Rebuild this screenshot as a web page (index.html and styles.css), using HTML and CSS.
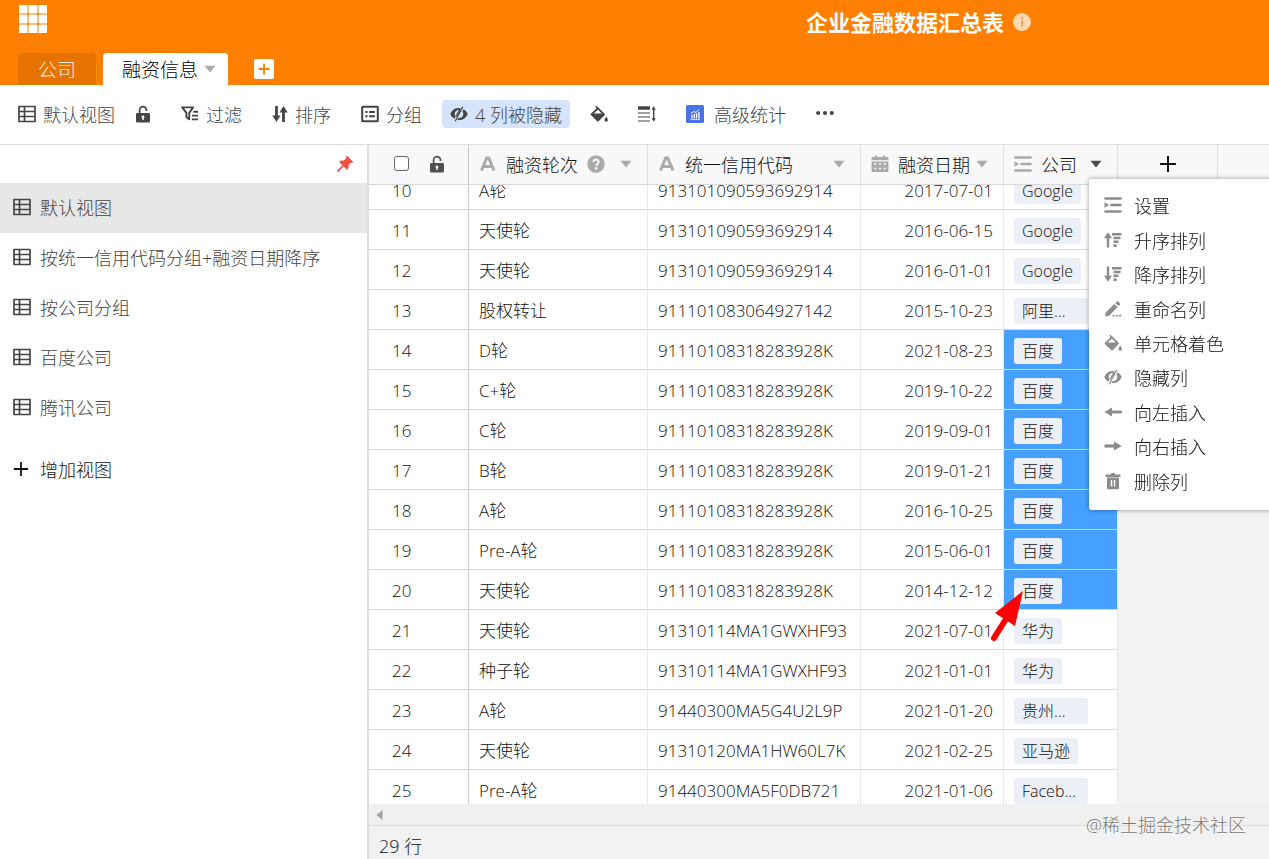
FILE: index.html
```html
<!DOCTYPE html>
<html lang="zh-CN">
<head>
<meta charset="utf-8">
<title>企业金融数据汇总表</title>
<link rel="stylesheet" href="styles.css">
</head>
<body>
<svg class="sprite" aria-hidden="true">
  <symbol id="i-table" viewBox="0 0 18 18"><path d="M1 1.5h16v15H1zM1 6.5h16M1 11.5h16M6.5 1.5v15" fill="none" stroke="currentColor" stroke-width="1.7" stroke-linejoin="round"/></symbol>
  <symbol id="i-lock" viewBox="0 0 16 18"><path d="M4.6 9V5.2a3.4 3.4 0 0 1 6.8-.4V6" fill="none" stroke="currentColor" stroke-width="1.7"/><path fill-rule="evenodd" d="M2.300 8h11.400a1.300 1.300 0 0 1 1.300 1.300v6.900a1.300 1.300 0 0 1-1.300 1.300H2.300A1.300 1.300 0 0 1 1 16.200V9.300A1.300 1.300 0 0 1 2.300 8zM8 10.600a1.500 1.500 0 0 0-.7 2.800V15h1.400v-1.600A1.500 1.500 0 0 0 8 10.600z" fill="currentColor"/></symbol>
  <symbol id="i-filter" viewBox="0 0 19 18"><path d="M1.200 2h11.600L8.700 7.800v6.700L5.700 12.300V7.800z" fill="none" stroke="currentColor" stroke-width="2" stroke-linejoin="round"/><path d="M13 6.700h5M11.500 10.700H18M11.500 14.700H18" stroke="currentColor" stroke-width="2"/></symbol>
  <symbol id="i-sort" viewBox="0 0 16 18"><path d="M4.500 1v11M11.500 6v11" stroke="currentColor" stroke-width="2.800"/><path d="M.3 10.500h8.200L4.500 17zM7.500 7.500h8.200L11.500 1z" fill="currentColor"/></symbol>
  <symbol id="i-group" viewBox="0 0 18 18"><rect x="1.200" y="1.700" width="15.600" height="14.600" rx=".6" fill="none" stroke="currentColor" stroke-width="2"/><path d="M4.300 7h2.200M8 7h5.800M4.300 11.200h2.200M8 11.200h5.800" stroke="currentColor" stroke-width="2"/></symbol>
  <symbol id="i-hide" viewBox="0 0 18 18"><path d="M10.800 3.200C5.300 1.800 2 5.200.3 9c.9 1.900 2.200 3.600 4 4.700l1.300-1.900C4 9.500 4.300 5.500 8.700 4.900l.9-.1z" fill="currentColor"/><path d="M7.200 14.800C12.700 16.200 16 12.800 17.700 9c-.9-1.900-2.200-3.600-4-4.700l-1.300 1.900c1.600 2.300 1.300 6.300-3.100 6.900l-.9.1z" fill="currentColor"/><path d="M12.800 1.800 5.200 16.200M10 4.500 5.800 11.500" stroke="currentColor" stroke-width="1.300"/></symbol>
  <symbol id="i-fill" viewBox="0 0 18 18"><path d="M5.800 1.200 8.200 3.600" stroke="currentColor" stroke-width="1.500"/><path d="M7.900 3.300 14 9.400 7.900 15.500 1.600 9.400z" fill="none" stroke="currentColor" stroke-width="1.900" stroke-linejoin="round"/><path d="M1.300 8.500h13L8 16zM16.200 11.500c1.200 1.800 1.700 2.700 1.700 3.600a1.700 1.700 0 0 1-3.400 0c0-.9.500-1.800 1.700-3.600z" fill="currentColor"/></symbol>
  <symbol id="i-height" viewBox="0 0 18 18"><path d="M0 3h12" stroke="currentColor" stroke-width="3.500"/><path d="M0 8h12M0 12h12M0 16h12" stroke="currentColor" stroke-width="1.200"/><path d="M15.700 3v12" stroke="currentColor" stroke-width="1.400"/><path d="m13.600 4.800 2.100-3.500 2.100 3.500zM13.600 13.200l2.100 3.500 2.100-3.500z" fill="currentColor"/></symbol>
  <symbol id="i-stats" viewBox="0 0 18 18"><rect width="18" height="18" rx="1.500" fill="#4b73e8"/><path d="M6 13v-3M8.300 13V9M10.600 13v-4.500M12.900 13V7" stroke="#fff" stroke-width="1.300"/><path d="M4.500 14.200h9.500M4.800 8.800l3-2.300 2.300 1 3-3" fill="none" stroke="#fff"/></symbol>
  <symbol id="i-more" viewBox="0 0 18 18"><circle cx="2.200" cy="8" r="2.100" fill="currentColor"/><circle cx="9" cy="8" r="2.100" fill="currentColor"/><circle cx="15.800" cy="8" r="2.100" fill="currentColor"/></symbol>
  <symbol id="i-pin" viewBox="0 0 18 18"><path d="M11 1.300 16.700 7c-.7.800-1.600.9-2.400.6l-2.500 2.600c.6 1.900.3 3.100-.8 4.200L7.600 11 2.300 16.400l-.9.200.2-.9L7 10.400 3.600 7c1.100-1.100 2.300-1.400 4.200-.8l2.600-2.500c-.3-.8-.2-1.700.6-2.400z" fill="currentColor" stroke="currentColor" stroke-width="1"/></symbol>
  <symbol id="i-text" viewBox="0 0 18 18"><path d="M2.500 15.500 7.700 3h2l5.300 12.500M4.700 11.500h8" fill="none" stroke="currentColor" stroke-width="3"/></symbol>
  <symbol id="i-calendar" viewBox="0 0 18 18"><path fill-rule="evenodd" d="M1.500 2H4V.5h2V2h6V.5h2V2h2.500a1 1 0 0 1 1 1v2.300H.5V3a1 1 0 0 1 1-1zM.5 6.500h17V16a1 1 0 0 1-1 1h-15a1 1 0 0 1-1-1zM3.300 8.200v1.600h2V8.200zm4.700 0v1.600h2V8.200zm4.700 0v1.600h2V8.200zM3.300 12.700v1.600h2v-1.600zm4.700 0v1.600h2v-1.600zm4.700 0v1.600h2v-1.600z" fill="currentColor"/></symbol>
  <symbol id="i-option" viewBox="0 0 18 18"><path d="M1.500 2.500h15M7.500 9h9M1.500 15.500h15" stroke="currentColor" stroke-width="2.700" stroke-linecap="round"/><path d="M.5 6.300 5.200 9 .5 11.700z" fill="currentColor"/></symbol>
  <symbol id="i-help" viewBox="0 0 18 18"><circle cx="9" cy="9" r="8.700" fill="currentColor"/><path d="M6.400 7c.1-3.200 5.300-3.200 5.300 0 0 1.800-2.500 2-2.500 4" fill="none" stroke="#fff" stroke-width="1.800"/><circle cx="9.200" cy="13.300" r="1.200" fill="#fff"/></symbol>
  <symbol id="i-caret" viewBox="0 0 12 8"><path d="M.5.8h11L6 7.500z" fill="currentColor"/></symbol>
  <symbol id="i-plus" viewBox="0 0 18 18"><path d="M9 1v16M1 9h16" stroke="currentColor" stroke-width="2"/></symbol>
  <symbol id="i-asc" viewBox="0 0 18 18"><path d="M4 5v11.500" stroke="currentColor" stroke-width="2.400"/><path d="M0 7.200h8L4 1.200z" fill="currentColor"/><path d="M8 3.200h9.500M9.500 7h7M9.500 10.800h5M9.500 14.600h3.200" stroke="currentColor" stroke-width="2.600"/></symbol>
  <symbol id="i-desc" viewBox="0 0 18 18"><path d="M4 1.500V13" stroke="currentColor" stroke-width="2.400"/><path d="M0 10.800h8l-4 6z" fill="currentColor"/><path d="M8 3.200h9.500M9.500 7h7M9.500 10.800h5M9.500 14.600h3.200" stroke="currentColor" stroke-width="2.600"/></symbol>
  <symbol id="i-edit" viewBox="0 0 18 18"><path d="m1 16.500.8-4L10.200 4l3.300 3.200-8.400 8.500zM11.200 3l1.500-1.500c.5-.5 1-.5 1.500 0L16 3.200c.5.500.5 1 0 1.500l-1.500 1.500zM8.500 14.800h2v1.800h-2zM11.800 14.800h2v1.800h-2zM15.100 14.800h2v1.800h-2z" fill="currentColor"/></symbol>
  <symbol id="i-left" viewBox="0 0 18 18"><path d="M6 9h10.500" stroke="currentColor" stroke-width="3.200" stroke-linecap="round"/><path d="M.3 9 8 4.600v8.800z" fill="currentColor"/></symbol>
  <symbol id="i-right" viewBox="0 0 18 18"><path d="M.5 9H12" stroke="currentColor" stroke-width="3.200"/><path d="M17.700 9 10 4.600v8.800z" fill="currentColor"/></symbol>
  <symbol id="i-trash" viewBox="0 0 18 18"><path fill-rule="evenodd" d="M1.500 2.500h5L7.500 1h3l1 1.500h5V5h-15zM3 5.500h12V16a1.200 1.200 0 0 1-1.200 1.200H4.200A1.200 1.200 0 0 1 3 16zM6.800 8v6.500h1.400V8zm3 0v6.500h1.400V8z" fill="currentColor"/></symbol>
</svg>

<div class="app">
  <header class="header">
    <div class="brand">
      <button class="launcher" aria-label="应用"><svg viewBox="0 0 28 28"><path d="M0 0h8v8H0zM10 0h8v8h-8zM20 0h8v8h-8zM0 10h8v8H0zM10 10h8v8h-8zM20 10h8v8h-8zM0 20h8v8H0zM10 20h8v8h-8zM20 20h8v8h-8z" fill="#fff" stroke="#fff"/></svg></button>
      <h1 class="title">企业金融数据汇总表</h1>
      <button class="info" aria-label="说明"><svg viewBox="0 0 18 18"><circle cx="9" cy="9" r="9" fill="#ffd9b3"/><circle cx="9" cy="5" r="1.300" fill="#f5a35c"/><path d="M9 7.500v6" stroke="#f5a35c" stroke-width="2"/></svg></button>
    </div>
    <nav class="tabs">
      <button class="tab">公司</button>
      <button class="tab tab-active">融资信息<svg class="caret"><use href="#i-caret"/></svg></button>
      <button class="tab-add" aria-label="新建表"><svg viewBox="0 0 12 12"><path d="M6 .5v11M.5 6h11" stroke="#ff8000" stroke-width="1.800"/></svg></button>
    </nav>
  </header>

  <div class="toolbar">
    <button class="tool"><svg class="icon"><use href="#i-table"/></svg>默认视图</button>
    <button class="tool tool-lock" aria-label="锁定"><svg class="icon icon-narrow"><use href="#i-lock"/></svg></button>
    <button class="tool"><svg class="icon"><use href="#i-filter"/></svg>过滤</button>
    <button class="tool"><svg class="icon icon-narrow"><use href="#i-sort"/></svg>排序</button>
    <button class="tool"><svg class="icon"><use href="#i-group"/></svg>分组</button>
    <button class="tool tool-on"><svg class="icon"><use href="#i-hide"/></svg>4 列被隐藏</button>
    <button class="tool" aria-label="着色"><svg class="icon"><use href="#i-fill"/></svg></button>
    <button class="tool" aria-label="行高"><svg class="icon"><use href="#i-height"/></svg></button>
    <button class="tool tool-stats"><svg class="icon"><use href="#i-stats"/></svg>高级统计</button>
    <button class="tool" aria-label="更多"><svg class="icon"><use href="#i-more"/></svg></button>
  </div>

  <div class="workspace">
    <aside class="sidebar">
      <div class="pinbar"><button class="pin" aria-label="固定"><svg class="icon"><use href="#i-pin"/></svg></button></div>
      <button class="view view-active"><svg class="icon"><use href="#i-table"/></svg>默认视图</button>
      <button class="view"><svg class="icon"><use href="#i-table"/></svg>按统一信用代码分组+融资日期降序</button>
      <button class="view"><svg class="icon"><use href="#i-table"/></svg>按公司分组</button>
      <button class="view"><svg class="icon"><use href="#i-table"/></svg>百度公司</button>
      <button class="view"><svg class="icon"><use href="#i-table"/></svg>腾讯公司</button>
      <button class="view view-add"><svg class="icon icon-add"><use href="#i-plus"/></svg>增加视图</button>
    </aside>

    <main class="sheet">
      <div class="grid" id="grid">
        <table class="table">
          <colgroup><col class="c-num"><col class="c-round"><col class="c-code"><col class="c-date"><col class="c-company"><col class="c-add"><col></colgroup>
          <thead>
            <tr>
              <th class="num"><div class="head head-num"><input class="check" type="checkbox" aria-label="全选"><svg class="icon icon-narrow dark"><use href="#i-lock"/></svg></div></th>
              <th><div class="head"><svg class="icon"><use href="#i-text"/></svg>融资轮次<svg class="icon help"><use href="#i-help"/></svg><svg class="caret"><use href="#i-caret"/></svg></div></th>
              <th><div class="head"><svg class="icon"><use href="#i-text"/></svg>统一信用代码<svg class="caret"><use href="#i-caret"/></svg></div></th>
              <th><div class="head"><svg class="icon"><use href="#i-calendar"/></svg>融资日期<svg class="caret"><use href="#i-caret"/></svg></div></th>
              <th class="anchor"><div class="head"><svg class="icon"><use href="#i-option"/></svg>公司<svg class="caret dark"><use href="#i-caret"/></svg></div>
                <div class="menu">
                  <button><svg class="icon"><use href="#i-option"/></svg>设置</button>
                  <button><svg class="icon"><use href="#i-asc"/></svg>升序排列</button>
                  <button><svg class="icon"><use href="#i-desc"/></svg>降序排列</button>
                  <button><svg class="icon"><use href="#i-edit"/></svg>重命名列</button>
                  <button><svg class="icon"><use href="#i-fill"/></svg>单元格着色</button>
                  <button><svg class="icon"><use href="#i-hide"/></svg>隐藏列</button>
                  <button><svg class="icon"><use href="#i-left"/></svg>向左插入</button>
                  <button><svg class="icon"><use href="#i-right"/></svg>向右插入</button>
                  <button><svg class="icon"><use href="#i-trash"/></svg>删除列</button>
                </div>
              </th>
              <th><button class="col-add" aria-label="新增列"><svg class="icon"><use href="#i-plus"/></svg></button></th>
              <th class="last"></th>
            </tr>
          </thead>
          <tbody>
            <tr><td class="num">10</td><td>A轮</td><td>913101090593692914</td><td class="date">2017-07-01</td><td><span class="tag">Google</span></td><td class="rest" colspan="2"></td></tr>
            <tr><td class="num">11</td><td>天使轮</td><td>913101090593692914</td><td class="date">2016-06-15</td><td><span class="tag">Google</span></td><td class="rest" colspan="2"></td></tr>
            <tr><td class="num">12</td><td>天使轮</td><td>913101090593692914</td><td class="date">2016-01-01</td><td><span class="tag">Google</span></td><td class="rest" colspan="2"></td></tr>
            <tr><td class="num">13</td><td>股权转让</td><td>911101083064927142</td><td class="date">2015-10-23</td><td><span class="tag tag-cut">阿里...</span></td><td class="rest" colspan="2"></td></tr>
            <tr><td class="num">14</td><td>D轮</td><td>91110108318283928K</td><td class="date">2021-08-23</td><td class="sel"><span class="tag">百度</span></td><td class="rest" colspan="2"></td></tr>
            <tr><td class="num">15</td><td>C+轮</td><td>91110108318283928K</td><td class="date">2019-10-22</td><td class="sel"><span class="tag">百度</span></td><td class="rest" colspan="2"></td></tr>
            <tr><td class="num">16</td><td>C轮</td><td>91110108318283928K</td><td class="date">2019-09-01</td><td class="sel"><span class="tag">百度</span></td><td class="rest" colspan="2"></td></tr>
            <tr><td class="num">17</td><td>B轮</td><td>91110108318283928K</td><td class="date">2019-01-21</td><td class="sel"><span class="tag">百度</span></td><td class="rest" colspan="2"></td></tr>
            <tr><td class="num">18</td><td>A轮</td><td>91110108318283928K</td><td class="date">2016-10-25</td><td class="sel"><span class="tag">百度</span></td><td class="rest" colspan="2"></td></tr>
            <tr><td class="num">19</td><td>Pre-A轮</td><td>91110108318283928K</td><td class="date">2015-06-01</td><td class="sel"><span class="tag">百度</span></td><td class="rest" colspan="2"></td></tr>
            <tr><td class="num">20</td><td>天使轮</td><td>91110108318283928K</td><td class="date">2014-12-12</td><td class="sel"><span class="tag">百度</span></td><td class="rest" colspan="2"></td></tr>
            <tr><td class="num">21</td><td>天使轮</td><td>91310114MA1GWXHF93</td><td class="date">2021-07-01</td><td><span class="tag">华为</span></td><td class="rest" colspan="2"></td></tr>
            <tr><td class="num">22</td><td>种子轮</td><td>91310114MA1GWXHF93</td><td class="date">2021-01-01</td><td><span class="tag">华为</span></td><td class="rest" colspan="2"></td></tr>
            <tr><td class="num">23</td><td>A轮</td><td>91440300MA5G4U2L9P</td><td class="date">2021-01-20</td><td><span class="tag tag-cut">贵州...</span></td><td class="rest" colspan="2"></td></tr>
            <tr><td class="num">24</td><td>天使轮</td><td>91310120MA1HW60L7K</td><td class="date">2021-02-25</td><td><span class="tag">亚马逊</span></td><td class="rest" colspan="2"></td></tr>
            <tr><td class="num">25</td><td>Pre-A轮</td><td>91440300MA5F0DB721</td><td class="date">2021-01-06</td><td><span class="tag tag-cut">Faceb...</span></td><td class="rest" colspan="2"></td></tr>
          </tbody>
        </table>
      </div>
      <div class="scrollbar"><svg viewBox="0 0 7 10"><path d="M6.500 0v10L.5 5z" fill="#a3a3a3"/></svg></div>
      <footer class="status">29 行</footer>
    </main>
  </div>
  <svg class="pointer" viewBox="0 0 34 52" aria-hidden="true"><path d="M4 48 16 29" stroke="#f00" stroke-width="6" stroke-linecap="round"/><path d="M33 1 5 23l20 13z" fill="#f00"/></svg>
  <div class="watermark">@稀土掘金技术社区</div>
</div>
<script src="grid.js"></script>
</body>
</html>
```

FILE: styles.css
```css
* { box-sizing: border-box; }

body {
  margin: 0;
  font-family: "Open Sans", "Noto Sans CJK SC", sans-serif;
  font-size: 18px;
  font-weight: 300;
  color: #111;
  background: #fff;
}

button {
  display: flex;
  align-items: center;
  padding: 0;
  border: 0;
  background: none;
  font: inherit;
  color: inherit;
  white-space: nowrap;
}

svg { display: block; flex: none; }
.sprite { position: absolute; width: 0; height: 0; }
.icon { width: 18px; height: 18px; }
.icon-narrow { width: 16px; }
.caret { width: 12px; height: 8px; color: #aaa; }

.app {
  position: relative;
  display: flex;
  flex-direction: column;
  height: 100vh;
  overflow: hidden;
}

.header {
  display: flex;
  flex-direction: column;
  justify-content: space-between;
  height: 85px;
  background: #ff8000;
}
.brand {
  display: flex;
  align-items: center;
  height: 44px;
  padding-left: 19px;
}
.launcher { margin: 0 9px 6px 0; }
.launcher svg { width: 28px; height: 28px; }
.title {
  margin: 0 9px 0 60%;
  font-size: 22px;
  line-height: 30px;
  font-weight: 700;
  color: #fff;
  white-space: nowrap;
}
.info svg { width: 18px; height: 18px; }

.tabs { display: flex; align-items: center; padding-left: 18px; }
.tab {
  height: 32px;
  margin-right: 7px;
  padding: 0 20px;
  border-radius: 4px 4px 0 0;
  background: #e67300;
  color: #ffeedd;
  font-size: 19px;
}
.tab-active {
  gap: 6px;
  margin-right: 26px;
  padding: 0 12px 0 19px;
  background: #fff;
  color: #000;
}
.tab-add {
  justify-content: center;
  width: 20px;
  height: 20px;
  border-radius: 2px;
  background: #fff;
}
.tab-add svg { width: 12px; height: 12px; }

.toolbar {
  display: flex;
  align-items: center;
  gap: 30px;
  height: 60px;
  padding: 0 0 2px 18px;
  border-bottom: 1px solid #ddd;
  color: #444;
}
.tool { gap: 7px; height: 28px; }
.tool-lock { margin-left: -10px; }
.tool-on {
  margin: 0 -10px;
  padding: 0 8px;
  border-radius: 4px;
  background: #d6e4fb;
}
.tool-stats { gap: 10px; }

.workspace { display: flex; flex: 1; min-height: 0; }

.sidebar {
  width: 369px;
  flex: none;
  border-right: 2px solid #ddd;
  color: #444;
}
.pinbar {
  display: flex;
  align-items: center;
  justify-content: flex-end;
  height: 38px;
  padding-right: 13px;
}
.pin { color: #f25042; }
.view {
  gap: 9px;
  width: 100%;
  height: 50px;
  padding: 0 0 2px 13px;
}
.view-active { background: #e7e7e7; }
.view-add { margin-top: 12px; color: #111; }
.icon-add { width: 16px; height: 16px; margin-right: 2px; }

.sheet {
  display: flex;
  flex: 1;
  flex-direction: column;
  min-width: 0;
  background: #f2f2f2;
}
.grid { flex: 1; min-height: 0; overflow: hidden; }

.table {
  width: 100%;
  table-layout: fixed;
  border-collapse: separate;
  border-spacing: 0;
}
.c-num { width: 100px; }
.c-round { width: 179px; }
.c-code { width: 213px; }
.c-date { width: 143px; }
.c-company { width: 114px; }
.c-add { width: 100px; }

thead { position: sticky; top: 0; z-index: 2; }
th {
  height: 40px;
  padding: 0;
  border-right: 1px solid #ddd;
  border-bottom: 1px solid #d9d9d9;
  background: #f8f8f8;
  font-weight: 300;
}
.last { border-right: 0; }
.head {
  display: flex;
  align-items: center;
  height: 39px;
  padding: 0 15px 2px 10px;
  white-space: nowrap;
}
.head .icon { margin-right: 9px; color: #aaa; }
.head .help { margin: 0 0 0 9px; }
.head .caret { margin-left: auto; }
.head .dark { color: #505050; }
.head-num { padding: 0 0 2px 25px; }
.check {
  appearance: none;
  width: 15px;
  height: 15px;
  margin: 0 20px 0 0;
  border: 1px solid #666;
  border-radius: 3px;
  background: #fff;
}
.col-add { justify-content: center; width: 100%; height: 39px; padding-bottom: 2px; }

td {
  height: 40px;
  padding: 2px 10px 0;
  border-right: 1px solid #e8e8e8;
  border-bottom: 1px solid #d9d9d9;
  background: #fff;
  font-size: 17px;
  line-height: 24px;
  white-space: nowrap;
}
.num { border-right-color: #c8c8c8; }
td.num { padding-left: 23px; }
.date { text-align: right; }
.sel { background: #45a0ff; }
.rest { border: 0; background: #f2f2f2; }

.tag {
  display: block;
  width: fit-content;
  height: 26px;
  padding: 0 8px;
  border-radius: 3px;
  background: #eceff5;
  font-size: 16px;
  line-height: 26px;
}
.tag-cut { width: 74px; }

.anchor { position: relative; }
.menu {
  position: absolute;
  top: 34px;
  left: 85px;
  z-index: 5;
  display: flex;
  flex-direction: column;
  width: 220px;
  height: 331px;
  padding: 9px 15px 12px;
  border-radius: 3px;
  background: #fff;
  box-shadow: 0 0 5px rgba(0, 0, 0, 0.4);
}
.menu button { flex: 1; gap: 12px; }
.menu .icon { color: #8c8c8c; }

.scrollbar {
  display: flex;
  align-items: center;
  height: 22px;
  padding-left: 7px;
  border-bottom: 1px solid #d9d9d9;
  background: #f0f0f0;
}
.scrollbar svg { width: 7px; height: 10px; }
.status {
  height: 33px;
  padding: 4px 10px;
  line-height: 32px;
}

.pointer {
  position: absolute;
  top: 590px;
  left: 990px;
  z-index: 6;
  width: 34px;
  height: 52px;
}
.watermark {
  position: absolute;
  right: 23px;
  bottom: 20px;
  z-index: 6;
  line-height: 28px;
  color: #777;
  text-shadow: 0 0 2px #fff;
}
```

FILE: grid.js
```js
// Open the sheet part-way into row 10, beneath the fixed column heads.
document.getElementById("grid").scrollTop = 15;
```
